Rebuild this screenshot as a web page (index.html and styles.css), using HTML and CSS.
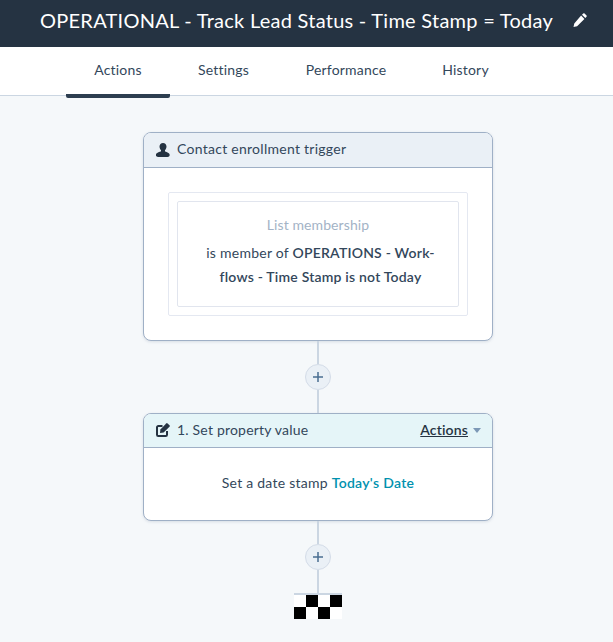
FILE: index.html
```html
<!DOCTYPE html>
<html lang="en">
<head>
<meta charset="utf-8">
<title>Workflow</title>
<link rel="stylesheet" href="styles.css">
</head>
<body>
<header class="topbar">
  <h1 class="title">OPERATIONAL - Track Lead Status - Time Stamp = Today</h1>
  <svg class="pencil" viewBox="0 0 14 14" width="14" height="14" aria-hidden="true"><path d="M10.200 .5a1 1 0 0 1 1.400 0l1.900 1.900a1 1 0 0 1 0 1.400l-1.200 1.200-3.300-3.300zM8.100 2.600l3.300 3.300-7.300 7.300-3.600.8.800-3.600z" fill="#fff"/></svg>
</header>
<nav class="tabs">
  <a class="tab tab-active">Actions</a>
  <a class="tab tab-settings">Settings</a>
  <a class="tab tab-performance">Performance</a>
  <a class="tab tab-history">History</a>
</nav>
<main class="canvas">
  <section class="card">
    <div class="card-head">
      <svg class="head-icon" viewBox="0 0 14 14" width="14" height="14" aria-hidden="true"><path d="M7 0c2.100 0 3.500 1.500 3.500 3.600 0 1.500-.7 2.900-1.500 3.700v.9c0 .4 1.300.7 2.500 1.200 1.300.5 2.200 1.300 2.200 2.600 0 1.200-1 2-2.200 2H2c-1.200 0-2.200-.8-2.200-2 0-1.300.9-2.100 2.200-2.600C3.200 8.900 5 8.600 5 8.200v-.9C4.200 6.500 3.500 5.100 3.500 3.600 3.500 1.500 4.900 0 7 0z" fill="#253342"/></svg>
      <span class="head-text">Contact enrollment trigger</span>
    </div>
    <div class="card-body card-body-trigger">
      <div class="frame-outer">
        <div class="frame-inner">
          <p class="filter-label">List membership</p>
          <p class="filter-text">is member of <strong>OPERATIONS - Work-<br>flows - Time Stamp is not Today</strong></p>
        </div>
      </div>
    </div>
  </section>
  <div class="connector">
    <div class="line"></div>
    <div class="plus"><svg viewBox="0 0 12 12" width="12" height="12" aria-hidden="true"><path d="M6 1v10M1 6h10" stroke="#4a6d91" stroke-width="1.500" fill="none"/></svg></div>
    <div class="line"></div>
  </div>
  <section class="card">
    <div class="card-head card-head-action">
      <svg class="head-icon" viewBox="0 0 14 14" width="14" height="14" aria-hidden="true"><path d="M6.500 3H2.300A1.300 1.300 0 0 0 1 4.300v7.400A1.300 1.300 0 0 0 2.300 13h7.400a1.300 1.300 0 0 0 1.300-1.300V8" fill="none" stroke="#253342" stroke-width="2"/><path d="M10.200 .4a1 1 0 0 1 1.400 0l1.900 1.900a1 1 0 0 1 0 1.400L7.600 9.600 4 10l.4-3.600z" fill="#253342"/></svg>
      <span class="head-text head-grow">1. Set property value</span>
      <a class="head-action">Actions</a>
      <span class="caret"></span>
    </div>
    <div class="card-body card-body-action">
      <p class="action-text">Set a date stamp <strong class="token">Today's Date</strong></p>
    </div>
  </section>
  <div class="connector">
    <div class="line"></div>
    <div class="plus"><svg viewBox="0 0 12 12" width="12" height="12" aria-hidden="true"><path d="M6 1v10M1 6h10" stroke="#4a6d91" stroke-width="1.500" fill="none"/></svg></div>
    <div class="line"></div>
  </div>
  <div class="finish">
    <i class="sq"></i><i class="sq sq-k"></i><i class="sq"></i><i class="sq sq-k"></i>
    <i class="sq sq-k"></i><i class="sq"></i><i class="sq sq-k"></i><i class="sq"></i>
  </div>
</main>
</body>
</html>
```
FILE: styles.css
```css
* { box-sizing: border-box; }
html, body { margin: 0; padding: 0; height: 100%; }
body {
  background: #f5f8fa;
  font-family: Lato, "Open Sans", sans-serif;
  color: #33475b;
  overflow: hidden;
}
.topbar {
  height: 47px;
  background: #253342;
  display: flex;
  align-items: center;
  padding-left: 40px;
  padding-bottom: 7px;
}
.title {
  margin: 0;
  font-size: 20px;
  font-weight: 400;
  letter-spacing: .26px;
  color: #fff;
  white-space: nowrap;
}
.pencil { margin-left: 20px; }
.tabs {
  height: 49px;
  background: #fff;
  border-bottom: 1px solid #cbd6e2;
  display: flex;
  padding-left: 66px;
  font-size: 14px;
  letter-spacing: .2px;
}
.tab {
  display: flex;
  justify-content: center;
  align-items: center;
  height: 51px;
  padding-bottom: 2px;
  border-bottom: 4px solid transparent;
  color: #33475b;
}
.tab-active { width: 104px; border-bottom-color: #2d3e50; border-radius: 0 0 2px 2px; }
.tab-settings { width: 107px; }
.tab-performance { width: 138px; }
.tab-history { width: 101px; }
.canvas {
  padding: 36px 0 0 143px;
}
.card {
  width: 350px;
  background: #fff;
  border: 1px solid #9fb0c6;
  border-radius: 8px;
  box-shadow: 0 1px 3px rgba(100, 120, 150, .2);
  overflow: hidden;
}
.card-head {
  height: 35px;
  background: #eaf0f6;
  border-bottom: 1px solid #9fb0c6;
  display: flex;
  align-items: center;
  padding: 0 10px 3px 12px;
  font-size: 14px;
  color: #33475b;
}
.head-icon { margin: 2px 7px 0 0; flex: none; }
.head-text { letter-spacing: .27px; }
.head-grow { flex: 1; letter-spacing: .2px; }
.card-head-action {
  height: 34px;
  background: #e5f5f8;
}
.head-action {
  color: #253342;
  font-weight: 600;
  letter-spacing: .15px;
  text-decoration: underline;
}
.caret {
  width: 0;
  height: 0;
  border-left: 4.500px solid transparent;
  border-right: 4.500px solid transparent;
  border-top: 5px solid #7c98b6;
  margin: 2px 1px 0 5px;
}
.card-body-trigger { padding: 24px 24px 24px; }
.frame-outer {
  border: 1px solid #e4e8f1;
  border-radius: 2px;
  padding: 8px;
  height: 124px;
}
.frame-inner {
  border: 1px solid #e1e5ee;
  border-radius: 2px;
  height: 106px;
  text-align: center;
  padding-top: 13px;
}
.filter-label {
  margin: 0;
  font-size: 14px;
  line-height: 20px;
  letter-spacing: .1px;
  color: #a3b3c6;
}
.filter-text {
  margin: 6px 0 0;
  padding-left: 5px;
  font-size: 14px;
  line-height: 24px;
  letter-spacing: .25px;
}
.filter-text strong { font-weight: 600; letter-spacing: .2px; }
.card-body-action {
  height: 72px;
  padding-top: 25px;
  text-align: center;
}
.action-text {
  margin: 0;
  font-size: 14px;
  line-height: 20px;
  letter-spacing: .25px;
}
.token { color: #0091ae; font-weight: 600; letter-spacing: .3px; }
.connector {
  width: 350px;
  display: flex;
  flex-direction: column;
  align-items: center;
}
.line {
  width: 2px;
  height: 23px;
  background: #cbd6e2;
}
.plus {
  width: 26px;
  height: 26px;
  border-radius: 50%;
  background: #eaf0f6;
  border: 1px solid #d4dce8;
  display: flex;
  align-items: center;
  justify-content: center;
}
.finish {
  width: 48px;
  margin-left: 151px;
  border-top: 2px solid #cbd6e2;
  display: grid;
  grid-template-columns: repeat(4, 12px);
  grid-auto-rows: 12px;
}
.sq { display: block; background: #fff; }
.sq-k { background: #000; }
```
